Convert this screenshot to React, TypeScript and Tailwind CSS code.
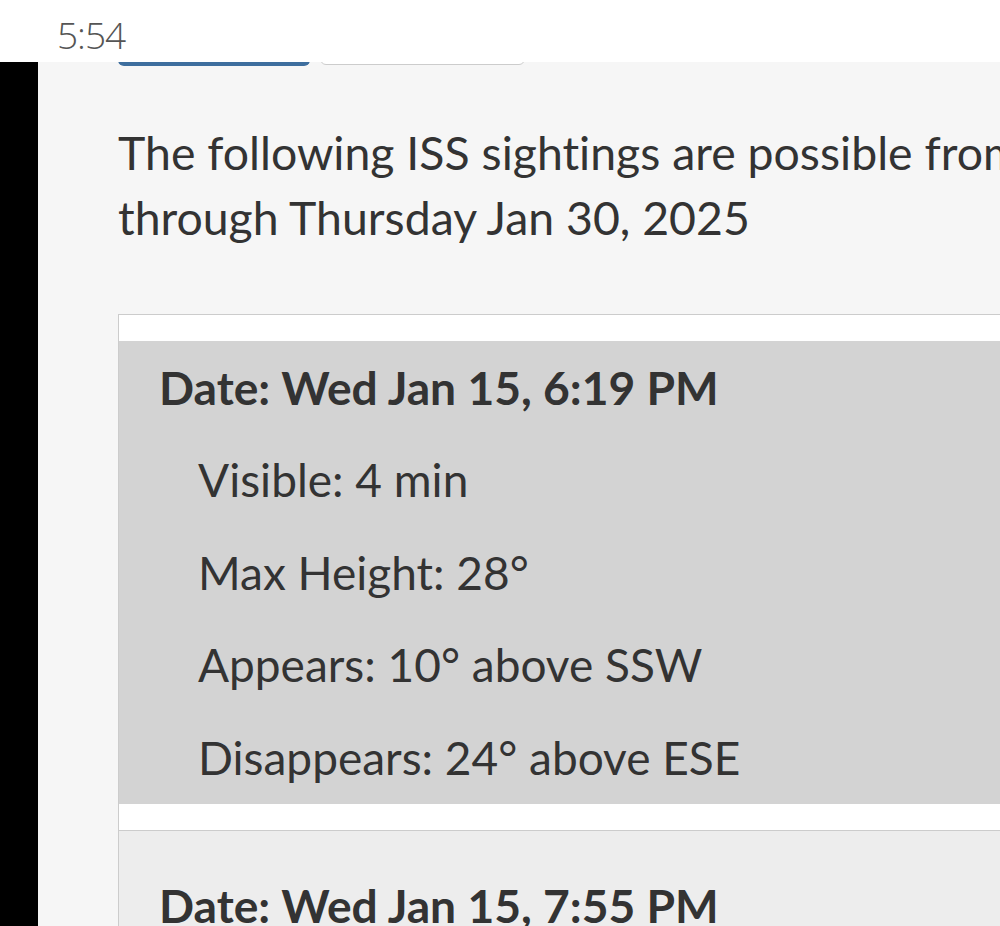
const font = { fontFamily: 'Lato, "Noto Sans", sans-serif' };

type Pass = {
  date: string;
  visible: string;
  height: string;
  appears: string;
  disappears: string;
};

const passes: Pass[] = [
  {
    date: 'Wed Jan 15, 6:19 PM',
    visible: '4 min',
    height: '28°',
    appears: '10° above SSW',
    disappears: '24° above ESE',
  },
  {
    date: 'Wed Jan 15, 7:55 PM',
    visible: '6 min',
    height: '51°',
    appears: '10° above W',
    disappears: '10° above ENE',
  },
];

function PassItem({ pass, index }: { pass: Pass; index: number }) {
  const odd = index % 2 === 0;
  return (
    <li
      className={
        odd
          ? 'bg-white pt-[26px] pb-[26px] border-b border-[#cccccc]'
          : 'bg-[#ededed] pt-[28px] pb-[26px] border-b border-[#cccccc]'
      }
    >
      <div className={odd ? 'bg-[#d3d3d3]' : ''}>
        <div className="pl-[40px] text-[46.2px] font-bold leading-[93px] whitespace-nowrap">
          Date: {pass.date}
        </div>
        <div className="pl-[79px] text-[46px] leading-[92.6px] whitespace-nowrap">
          <div>Visible: {pass.visible}</div>
          <div>Max Height: {pass.height}</div>
          <div>Appears: {pass.appears}</div>
          <div>Disappears: {pass.disappears}</div>
        </div>
      </div>
    </li>
  );
}

export default function App() {
  return (
    <div
      className="w-[1000px] h-[926px] overflow-hidden flex flex-col bg-white [font-variant-ligatures:none]"
      style={font}
    >
      {/* status bar */}
      <div className="h-[62px] shrink-0 bg-white flex items-center pl-[57px] relative z-10">
        <span
          className="text-[37px] font-light text-[#555555] tracking-[-1px] leading-none mt-[6px]"
          style={{ fontFamily: '"Open Sans", sans-serif' }}
        >
          5:54
        </span>
      </div>

      <div className="flex flex-1 min-h-0">
        <div className="w-[38px] shrink-0 bg-black" />
        <main className="flex-1 bg-[#f6f6f6] text-[#333333] pl-[80px] overflow-hidden">
          {/* buttons scrolled under the status bar */}
          <div className="flex gap-[10px] -mt-[40px]">
            <button className="w-[192px] h-[44px] rounded-[6px] bg-[#3e6e9e]" />
            <button className="w-[205px] h-[43px] rounded-[6px] bg-white border border-[#cccccc]" />
          </div>

          <p className="mt-[54px] w-[1000px] text-[46.4px] leading-[65px] whitespace-nowrap">
            The following ISS sightings are possible from
            <br />
            through Thursday Jan 30, 2025
          </p>

          <ul className="mt-[64px] w-[1000px] bg-white border-t border-l border-[#cccccc]">
            {passes.map((p, i) => (
              <PassItem key={i} pass={p} index={i} />
            ))}
          </ul>
        </main>
      </div>
    </div>
  );
}
